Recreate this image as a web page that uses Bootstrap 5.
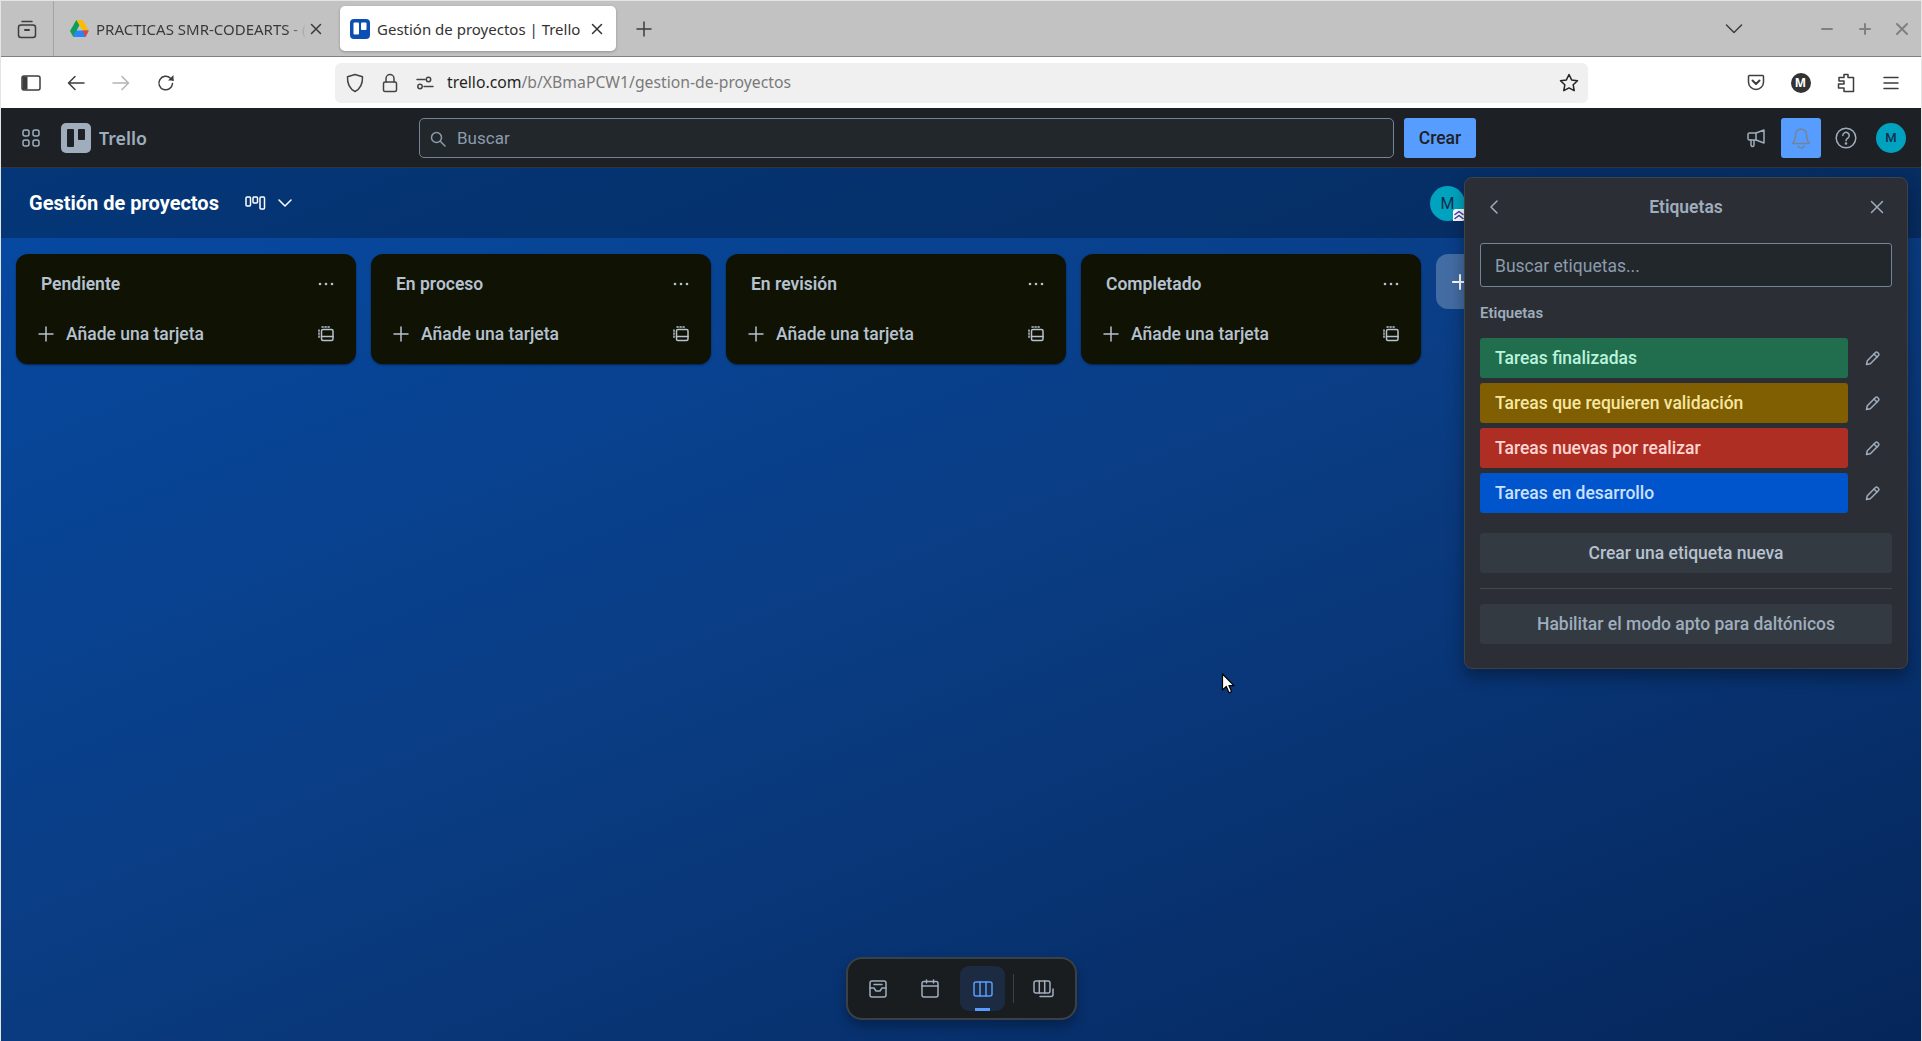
<!DOCTYPE html>
<html lang="es">
<head>
  <meta charset="UTF-8" />
  <meta name="viewport" content="width=device-width, initial-scale=1.0" />
  <title>Gestión de proyectos | Trello</title>
  <link href="https://cdn.jsdelivr.net/npm/bootstrap@5.3.0/dist/css/bootstrap.min.css" rel="stylesheet" />
  <style>
    html, body { height: 100%; margin: 0; overflow: hidden; }
    body { font-family: Roboto, "Liberation Sans", sans-serif; }
    svg { display: block; fill: none; stroke: currentColor; stroke-width: 1.5; stroke-linecap: round; stroke-linejoin: round; }
    .app-shell { position: relative; height: 1041px; border: 1px solid #e4e4e4; border-bottom: 0; display: flex; flex-direction: column; }

    /* firefox chrome */
    .tab-strip { height: 56px; flex: none; background: #c2c2c2; border-bottom: 1px solid #808080; font-family: "Noto Sans", sans-serif; font-size: 15px; color: #3a3a3a; }
    .tab-archive { width: 53px; height: 55px; border-right: 1px solid #a4a4a4; color: #3d3d3d; }
    .tab-item { height: 45px; border-radius: 5px; width: 276px; padding: 0 13px 0 10px; gap: 7px; }
    .tab-first { width: 280px; margin-left: 1px; margin-right: 5px; padding: 0 13px 0 15px; gap: 4px; }
    .tab-active { background: #fff; box-shadow: 0 1px 3px rgba(0,0,0,.25); color: #333; }
    .tab-label { flex: 1; white-space: nowrap; min-width: 0; padding-top: 1px; }
    .tab-first .tab-label { margin-left: 3px; -webkit-mask-image: linear-gradient(to right, #000 92%, transparent 100%); mask-image: linear-gradient(to right, #000 92%, transparent 100%); }
    .tab-plus { margin-left: 20px; color: #3d3d3d; }
    .win-controls { margin-left: auto; }
    .win-chevron { color: #3d3d3d; margin-right: 66px; }
    .win-btn { width: 37.5px; color: #808080; }
    .toolbar { height: 51px; flex: none; background: #fff; padding-left: 7px; padding-right: 8px; }
    .tool-btn { width: 45px; height: 51px; color: #3d3d3d; }
    .tool-off { color: #b5b5b5; }
    .url-bar { width: 1253px; height: 40px; margin-left: 147px; background: #f0f0f0; border-radius: 6px; font-family: "Noto Sans", sans-serif; font-size: 15.75px; color: #7a7a7a; padding: 0 9px 0 2px; }
    .url-icon { width: 35px; color: #444; }
    .url-text { margin-left: 5px; flex: 1; }
    .url-host { color: #1f1f1f; }
    .fx-account { width: 20px; height: 20px; border-radius: 50%; background: #333; color: #fff; font: 700 12px "Noto Sans", sans-serif; }

    /* trello header */
    .top-bar { height: 60px; flex: none; background: #1d2125; border-bottom: 1px solid #31363c; color: #9fadbc; }
    .grid-btn { width: 44px; height: 40px; margin-left: 8px; }
    .brand-logo { width: 30px; height: 30px; margin-left: 8px; border-radius: 5px; background: #9fadbc; padding: 6px; gap: 4px; }
    .brand-bar { width: 8px; height: 18px; background: #1d2125; border-radius: 1px; }
    .brand-bar-short { height: 11px; }
    .brand-name { margin-left: 8px; width: 320px; font: 600 17.8px "Noto Sans", sans-serif; }
    .search-box { width: 975px; height: 40px; background: #22272b; border: 1px solid #738496; border-radius: 5px; padding: 2px 0 0 10px; gap: 11px; font-size: 17px; color: #8c9bab; }
    .create-btn { width: 72px; height: 40px; margin-left: 10px; padding: 0; background: #579dff; border: 0; border-radius: 3px; color: #1d2125; font: 500 17.5px Roboto, sans-serif; }
    .head-actions { margin-left: auto; margin-right: 15px; gap: 5px; }
    .head-btn { width: 40px; height: 40px; border-radius: 3px; }
    .head-on { background: #579dff; color: #738496; }
    .avatar-dot { border-radius: 50%; background: #00a3bf; color: #172b4d; }
    .avatar-head { width: 30px; height: 30px; margin-left: 5px; font: 500 13px Roboto, sans-serif; }

    /* board */
    .board-area { flex: 1; min-height: 0; background: linear-gradient(158deg, #064aa3 0%, #0a3c82 50%, #05265a 100%); }
    .board-head { height: 70px; background: rgba(0,0,0,.26); color: #fff; padding-left: 28px; }
    .board-title { font: 700 20px Roboto, sans-serif; margin-right: 26px; }
    .board-chevron { margin-left: 12px; }
    .avatar-board { position: relative; width: 35px; height: 35px; margin-left: auto; margin-right: 456px; font: 400 16px Roboto, sans-serif; }
    .avatar-badge { position: absolute; right: 0; bottom: 0; width: 12px; height: 12px; border-radius: 3px 0 3px 0; background: #fff; color: #3a3fa8; }
    .lists-row { padding: 16px 0 0 15px; gap: 15px; }
    .list-panel { width: 340px; height: 110px; flex: none; background: #101204; border: 0; border-radius: 12px; box-shadow: 0 1px 2px rgba(0,0,0,.5); color: #b6c2cf; padding: 0 22px 0 25px; }
    .list-head { height: 57px; padding-top: 2px; }
    .list-name { font: 600 17.5px Roboto, sans-serif; flex: 1; }
    .list-add { height: 44px; margin-left: -3px; gap: 12px; padding-top: 1px; font: 500 17.5px Roboto, sans-serif; }
    .list-add-text { flex: 1; }
    .add-list { width: 60px; height: 55px; flex: none; border-radius: 12px; background: rgba(255,255,255,.24); color: #fff; padding-left: 16px; }

    /* labels popover */
    .labels-pop { position: absolute; left: 1463px; top: 176px; width: 444px; height: 492px; background: #2b2e35; border: 1px solid #3d4249; border-radius: 8px; box-shadow: 0 8px 16px rgba(0,0,0,.35); padding: 0 15px; color: #9fadbc; }
    .pop-head { height: 58px; flex: none; }
    .pop-title { flex: 1; text-align: center; font: 600 17.5px Roboto, sans-serif; color: #9fadbc; }
    .pop-icon { width: 28px; color: #9fadbc; }
    .pop-back { margin-left: 9px; }
    .pop-search { height: 44px; flex: none; margin-top: 7px; background: #22272b; border: 1px solid #738496; border-radius: 3px; color: #8c9bab; font: 400 17.5px Roboto, sans-serif; padding: 1px 14px 0; box-shadow: none; }
    .pop-search::placeholder { color: #8c9bab; opacity: 1; }
    .pop-search:focus { background: #22272b; border-color: #738496; box-shadow: none; color: #8c9bab; }
    .pop-sub { margin: 16px 0 15px; height: 20px; font: 600 15px/20px Roboto, sans-serif; color: #9fadbc; }
    .label-list { gap: 5px; margin: 0; }
    .label-chip { width: 368px; flex: none; height: 40px; border-radius: 3px; padding: 0 15px; font: 500 17.5px Roboto, sans-serif; }
    .chip-green { background: #216e4e; color: #baf3db; }
    .chip-yellow { background: #7f5f01; color: #f8e6a0; }
    .chip-red { background: #ae2e24; color: #ffd5d2; }
    .chip-blue { background: #0055cc; color: #cce0ff; }
    .chip-edit { width: 44px; flex: none; padding-left: 17px; color: #9fadbc; }
    .pop-btn { width: 100%; height: 40px; flex: none; padding: 0; background: #343a42; border: 0; border-radius: 3px; color: #b6c2cf; font: 500 17.5px Roboto, sans-serif; }
    .pop-btn:hover { background: #343a42; color: #b6c2cf; }
    .pop-btn-new { margin-top: 20px; }
    .pop-btn-alt { color: #9fadbc; }
    .pop-rule { margin: 15px 0; border: 0; border-top: 1px solid #43494f; opacity: 1; }

    /* bottom switcher */
    .view-switch { position: absolute; left: 845px; top: 956px; width: 231px; height: 63px; background: #1a1d20; border: 2px solid #3b4046; border-radius: 16px; box-shadow: 0 6px 12px rgba(0,0,0,.3); color: #9fadbc; }
    .view-btn { position: relative; width: 45px; height: 45px; border-radius: 9px; margin-left: 7px; }
    .view-on { margin-left: 8px; background: #1c2b41; color: #579dff; }
    .view-on::after { content: ""; position: absolute; left: 15px; bottom: 0; width: 15px; height: 3px; background: #579dff; }
    .view-sep { width: 1px; height: 29px; background: #3b4046; margin: 0 7px 0 8px; }
    .mouse-arrow { position: absolute; left: 1220px; top: 672px; }
  </style>
</head>
<body>
<div class="app-shell">

  <!-- browser tabs -->
  <div class="tab-strip d-flex align-items-center">
    <div class="tab-archive d-flex align-items-center justify-content-center">
      <svg width="20" height="20" viewBox="0 0 20 20"><path d="M5 2.500h10"/><rect x="1.500" y="6" width="17" height="12.500" rx="2.500"/><path d="M8 11h4" stroke-width="2"/></svg>
    </div>
    <div class="tab-item tab-first d-flex align-items-center">
      <svg width="19" height="18" viewBox="0 0 19 18" style="stroke:none">
        <path d="M6.300 0h6.400l6 10.500h-6.200z" fill="#fbbc04"/>
        <path d="M6.300 0l3.100 5.300-6.100 11.700L0 11z" fill="#0f9d58"/>
        <path d="M3.300 17l3-6.500h12.400L15.500 17z" fill="#2684fc"/>
        <path d="M12.500 10.500h6.200L15.500 17z" fill="#ea4335"/>
      </svg>
      <span class="tab-label">PRACTICAS SMR-CODEARTS - (</span>
      <svg width="12" height="12" viewBox="0 0 12 12"><path d="M1.500 1.500l9 9M10.500 1.500l-9 9"/></svg>
    </div>
    <div class="tab-item tab-active d-flex align-items-center">
      <svg width="20" height="20" viewBox="0 0 20 20" style="stroke:none"><rect width="20" height="20" rx="4" fill="#0b4fb3"/><rect x="3.500" y="3.500" width="5.500" height="12" rx="1" fill="#fff"/><rect x="11" y="3.500" width="5.500" height="7.500" rx="1" fill="#fff"/></svg>
      <span class="tab-label">Gestión de proyectos | Trello</span>
      <svg width="12" height="12" viewBox="0 0 12 12"><path d="M1.500 1.500l9 9M10.500 1.500l-9 9"/></svg>
    </div>
    <div class="tab-plus"><svg width="16" height="16" viewBox="0 0 16 16"><path d="M8 1v14M1 8h14"/></svg></div>
    <div class="win-controls d-flex align-items-center">
      <div class="win-chevron"><svg width="18" height="10" viewBox="0 0 18 10"><path d="M1.500 1l7.500 7.500L16.500 1"/></svg></div>
      <div class="win-btn d-flex justify-content-center"><svg width="12" height="12" viewBox="0 0 12 12"><path d="M1 6h10" stroke-width="2"/></svg></div>
      <div class="win-btn d-flex justify-content-center"><svg width="12" height="12" viewBox="0 0 12 12"><path d="M1 6h10M6 1v10" stroke-width="2"/></svg></div>
      <div class="win-btn d-flex justify-content-center"><svg width="12" height="12" viewBox="0 0 12 12"><path d="M1 1l10 10M11 1L1 11" stroke-width="2"/></svg></div>
    </div>
  </div>

  <!-- browser toolbar -->
  <div class="toolbar d-flex align-items-center">
    <div class="tool-btn d-flex align-items-center justify-content-center">
      <svg width="20" height="16" viewBox="0 0 20 16"><rect x="1" y="1" width="18" height="14" rx="2"/><rect x="1.500" y="1.500" width="5" height="13" fill="currentColor" stroke="none"/></svg>
    </div>
    <div class="tool-btn d-flex align-items-center justify-content-center">
      <svg width="18" height="16" viewBox="0 0 18 16"><path d="M17 8H1.500M8 1.500L1.500 8 8 14.500"/></svg>
    </div>
    <div class="tool-btn tool-off d-flex align-items-center justify-content-center">
      <svg width="18" height="16" viewBox="0 0 18 16"><path d="M1 8h15.500M10 1.500L16.500 8 10 14.500"/></svg>
    </div>
    <div class="tool-btn d-flex align-items-center justify-content-center">
      <svg width="18" height="18" viewBox="0 0 18 18"><path d="M15.500 9.500a6.800 6.800 0 1 1-2-5.300l2.500 2"/><path d="M16.500 1v5.500H11" fill="currentColor" stroke="none"/></svg>
    </div>
    <div class="url-bar d-flex align-items-center">
      <div class="url-icon d-flex justify-content-center"><svg width="18" height="20" viewBox="0 0 18 20"><path d="M9 1.500l7.500 2.200c.3 6.800-1.700 11.800-7.500 14.800C3.200 15.500 1.200 10.500 1.500 3.700z"/></svg></div>
      <div class="url-icon d-flex justify-content-center"><svg width="16" height="20" viewBox="0 0 16 20"><rect x="1.500" y="9" width="13" height="9.500" rx="1.500"/><path d="M4 9V5.500a4 4 0 0 1 8 0V9"/></svg></div>
      <div class="url-icon d-flex justify-content-center"><svg width="18" height="16" viewBox="0 0 18 16"><circle cx="12.500" cy="4.500" r="2.200"/><circle cx="4" cy="11.500" r="2.200"/><path d="M1 4.500h8M8 11.500h9"/></svg></div>
      <div class="url-text"><span class="url-host">trello.com</span>/b/XBmaPCW1/gestion-de-proyectos</div>
      <svg width="20" height="20" viewBox="0 0 20 20" class="text-dark"><path d="M10 1.500l2.600 5.400 5.900.8-4.300 4.100 1 5.900L10 14.900l-5.200 2.800 1-5.900L1.500 7.700l5.900-.8z"/></svg>
    </div>
    <div class="d-flex ms-auto">
      <div class="tool-btn d-flex align-items-center justify-content-center">
        <svg width="18" height="18" viewBox="0 0 18 18"><path d="M2.500 1.500h13a1 1 0 0 1 1 1V8a7.500 7.500 0 0 1-15 0V2.500a1 1 0 0 1 1-1z"/><path d="M5.500 6.500L9 10l3.500-3.500" stroke-width="2"/></svg>
      </div>
      <div class="tool-btn d-flex align-items-center justify-content-center"><span class="fx-account d-flex align-items-center justify-content-center">M</span></div>
      <div class="tool-btn d-flex align-items-center justify-content-center">
        <svg width="18" height="20" viewBox="0 0 18 20"><path d="M7 1.500h4v3h5.500v14H7v-3.500H1.500v-4H7V8H2V4.500h5z"/></svg>
      </div>
      <div class="tool-btn d-flex align-items-center justify-content-center">
        <svg width="16" height="14" viewBox="0 0 16 14"><path d="M1 1.500h14M1 7h14M1 12.500h14"/></svg>
      </div>
    </div>
  </div>

  <!-- trello top bar -->
  <nav class="top-bar d-flex align-items-center">
    <div class="grid-btn d-flex align-items-center justify-content-center">
      <svg width="18" height="18" viewBox="0 0 18 18"><rect x="1" y="1" width="6" height="6" rx="2"/><rect x="11" y="1" width="6" height="6" rx="2"/><rect x="1" y="11" width="6" height="6" rx="2"/><rect x="11" y="11" width="6" height="6" rx="2"/></svg>
    </div>
    <div class="brand-logo d-flex"><span class="brand-bar"></span><span class="brand-bar brand-bar-short"></span></div>
    <span class="brand-name">Trello</span>
    <div class="search-box d-flex align-items-center">
      <svg width="16" height="16" viewBox="0 0 16 16"><circle cx="6.500" cy="6.500" r="5"/><path d="M10.500 10.500l4.500 4.500"/></svg>
      <span>Buscar</span>
    </div>
    <button type="button" class="btn create-btn">Crear</button>
    <div class="head-actions d-flex align-items-center">
      <div class="head-btn d-flex align-items-center justify-content-center">
        <svg width="20" height="20" viewBox="0 0 20 20"><path d="M18 2v13l-8-3H3.500a1.500 1.500 0 0 1-1.500-1.500v-4A1.500 1.500 0 0 1 3.500 5H10z"/><path d="M10 5v7M5 12v5a1.500 1.500 0 0 0 3 0v-4.500"/></svg>
      </div>
      <div class="head-btn head-on d-flex align-items-center justify-content-center">
        <svg width="20" height="22" viewBox="0 0 20 22"><path d="M10 2a5.500 5.500 0 0 0-5.500 5.500c0 5-1 7-3 9h17c-2-2-3-4-3-9A5.500 5.500 0 0 0 10 2z"/><path d="M7 19a3.200 3.200 0 0 0 6 0"/></svg>
      </div>
      <div class="head-btn d-flex align-items-center justify-content-center">
        <svg width="22" height="22" viewBox="0 0 22 22"><circle cx="11" cy="11" r="9.800"/><path d="M7.800 8.500a3.200 3.200 0 1 1 5 2.700c-1.100.7-1.800 1.300-1.800 2.600"/><circle cx="11" cy="16.500" r=".6"/></svg>
      </div>
      <span class="avatar-dot avatar-head d-flex align-items-center justify-content-center">M</span>
    </div>
  </nav>

  <!-- board -->
  <main class="board-area">
    <div class="board-head d-flex align-items-center">
      <span class="board-title">Gestión de proyectos</span>
      <svg width="21" height="14" viewBox="0 0 21 14" stroke-width="2"><rect x="1" y="1" width="4.500" height="9" rx="1"/><rect x="8" y="1" width="4.500" height="6" rx="1"/><rect x="15" y="1" width="4.500" height="12" rx="1"/></svg>
      <svg class="board-chevron" width="14" height="8" viewBox="0 0 14 8"><path d="M1 1l6 6 6-6"/></svg>
      <div class="avatar-dot avatar-board d-flex align-items-center justify-content-center">M
        <span class="avatar-badge d-flex align-items-center justify-content-center"><svg width="10" height="10" viewBox="0 0 10 10"><path d="M1 4.500L5 1.500l4 3M1 8.500l4-3 4 3"/></svg></span>
      </div>
    </div>
    <div class="lists-row d-flex align-items-start">
      <div class="card list-panel">
        <div class="list-head d-flex align-items-center"><span class="list-name">Pendiente</span><svg width="16" height="4" viewBox="0 0 16 4"><circle cx="2" cy="2" r="1.300" fill="currentColor" stroke="none"/><circle cx="8" cy="2" r="1.300" fill="currentColor" stroke="none"/><circle cx="14" cy="2" r="1.300" fill="currentColor" stroke="none"/></svg></div>
        <div class="list-add d-flex align-items-center"><svg width="16" height="16" viewBox="0 0 16 16"><path d="M8 1v14M1 8h14"/></svg><span class="list-add-text">Añade una tarjeta</span><svg width="16" height="16" viewBox="0 0 16 16" stroke-width="1.300"><rect x="3.500" y="3.500" width="11.500" height="11" rx="1.500"/><path d="M3.500 10.500h11.500"/><path d="M1 4v9M4 1h9" stroke-dasharray="1.200 1.800"/></svg></div>
      </div>
      <div class="card list-panel">
        <div class="list-head d-flex align-items-center"><span class="list-name">En proceso</span><svg width="16" height="4" viewBox="0 0 16 4"><circle cx="2" cy="2" r="1.300" fill="currentColor" stroke="none"/><circle cx="8" cy="2" r="1.300" fill="currentColor" stroke="none"/><circle cx="14" cy="2" r="1.300" fill="currentColor" stroke="none"/></svg></div>
        <div class="list-add d-flex align-items-center"><svg width="16" height="16" viewBox="0 0 16 16"><path d="M8 1v14M1 8h14"/></svg><span class="list-add-text">Añade una tarjeta</span><svg width="16" height="16" viewBox="0 0 16 16" stroke-width="1.300"><rect x="3.500" y="3.500" width="11.500" height="11" rx="1.500"/><path d="M3.500 10.500h11.500"/><path d="M1 4v9M4 1h9" stroke-dasharray="1.200 1.800"/></svg></div>
      </div>
      <div class="card list-panel">
        <div class="list-head d-flex align-items-center"><span class="list-name">En revisión</span><svg width="16" height="4" viewBox="0 0 16 4"><circle cx="2" cy="2" r="1.300" fill="currentColor" stroke="none"/><circle cx="8" cy="2" r="1.300" fill="currentColor" stroke="none"/><circle cx="14" cy="2" r="1.300" fill="currentColor" stroke="none"/></svg></div>
        <div class="list-add d-flex align-items-center"><svg width="16" height="16" viewBox="0 0 16 16"><path d="M8 1v14M1 8h14"/></svg><span class="list-add-text">Añade una tarjeta</span><svg width="16" height="16" viewBox="0 0 16 16" stroke-width="1.300"><rect x="3.500" y="3.500" width="11.500" height="11" rx="1.500"/><path d="M3.500 10.500h11.500"/><path d="M1 4v9M4 1h9" stroke-dasharray="1.200 1.800"/></svg></div>
      </div>
      <div class="card list-panel">
        <div class="list-head d-flex align-items-center"><span class="list-name">Completado</span><svg width="16" height="4" viewBox="0 0 16 4"><circle cx="2" cy="2" r="1.300" fill="currentColor" stroke="none"/><circle cx="8" cy="2" r="1.300" fill="currentColor" stroke="none"/><circle cx="14" cy="2" r="1.300" fill="currentColor" stroke="none"/></svg></div>
        <div class="list-add d-flex align-items-center"><svg width="16" height="16" viewBox="0 0 16 16"><path d="M8 1v14M1 8h14"/></svg><span class="list-add-text">Añade una tarjeta</span><svg width="16" height="16" viewBox="0 0 16 16" stroke-width="1.300"><rect x="3.500" y="3.500" width="11.500" height="11" rx="1.500"/><path d="M3.500 10.500h11.500"/><path d="M1 4v9M4 1h9" stroke-dasharray="1.200 1.800"/></svg></div>
      </div>
      <div class="add-list d-flex align-items-center"><svg width="16" height="16" viewBox="0 0 16 16"><path d="M8 1v14M1 8h14" stroke-width="2"/></svg></div>
    </div>
  </main>

  <!-- labels popover -->
  <section class="labels-pop d-flex flex-column">
    <div class="pop-head d-flex align-items-center">
      <div class="pop-icon"><svg class="pop-back" width="10" height="16" viewBox="0 0 10 16"><path d="M8 2L2 8l6 6"/></svg></div>
      <span class="pop-title">Etiquetas</span>
      <div class="pop-icon d-flex justify-content-end"><svg width="14" height="14" viewBox="0 0 14 14" class="me-2"><path d="M1.500 1.500l11 11M12.500 1.500l-11 11"/></svg></div>
    </div>
    <input type="text" class="form-control pop-search" placeholder="Buscar etiquetas..." />
    <div class="pop-sub">Etiquetas</div>
    <ul class="label-list list-unstyled d-flex flex-column">
      <li class="d-flex align-items-center"><span class="label-chip chip-green d-flex align-items-center">Tareas finalizadas</span><span class="chip-edit d-flex"><svg width="15" height="15" viewBox="0 0 15 15"><path d="M1.500 13.500l.8-3.800L10.500 1.500a1.400 1.400 0 0 1 2 0l1 1a1.400 1.400 0 0 1 0 2L5.300 12.700z"/><path d="M9 3l3 3"/></svg></span></li>
      <li class="d-flex align-items-center"><span class="label-chip chip-yellow d-flex align-items-center">Tareas que requieren validación</span><span class="chip-edit d-flex"><svg width="15" height="15" viewBox="0 0 15 15"><path d="M1.500 13.500l.8-3.800L10.500 1.500a1.400 1.400 0 0 1 2 0l1 1a1.400 1.400 0 0 1 0 2L5.300 12.700z"/><path d="M9 3l3 3"/></svg></span></li>
      <li class="d-flex align-items-center"><span class="label-chip chip-red d-flex align-items-center">Tareas nuevas por realizar</span><span class="chip-edit d-flex"><svg width="15" height="15" viewBox="0 0 15 15"><path d="M1.500 13.500l.8-3.800L10.500 1.500a1.400 1.400 0 0 1 2 0l1 1a1.400 1.400 0 0 1 0 2L5.300 12.700z"/><path d="M9 3l3 3"/></svg></span></li>
      <li class="d-flex align-items-center"><span class="label-chip chip-blue d-flex align-items-center">Tareas en desarrollo</span><span class="chip-edit d-flex"><svg width="15" height="15" viewBox="0 0 15 15"><path d="M1.500 13.500l.8-3.800L10.500 1.500a1.400 1.400 0 0 1 2 0l1 1a1.400 1.400 0 0 1 0 2L5.300 12.700z"/><path d="M9 3l3 3"/></svg></span></li>
    </ul>
    <button type="button" class="btn pop-btn pop-btn-new">Crear una etiqueta nueva</button>
    <hr class="pop-rule" />
    <button type="button" class="btn pop-btn pop-btn-alt">Habilitar el modo apto para daltónicos</button>
  </section>

  <!-- bottom view switcher -->
  <div class="view-switch d-flex align-items-center">
    <div class="view-btn d-flex align-items-center justify-content-center">
      <svg width="18" height="18" viewBox="0 0 18 18"><rect x="1" y="1" width="16" height="16" rx="2"/><path d="M1 8h4l2 3h4l2-3h4M5 4.500h8"/></svg>
    </div>
    <div class="view-btn d-flex align-items-center justify-content-center">
      <svg width="18" height="19" viewBox="0 0 18 19"><rect x="1" y="2.500" width="16" height="15.500" rx="2"/><path d="M1 7h16M5.500 1v3M12.500 1v3"/></svg>
    </div>
    <div class="view-btn view-on d-flex align-items-center justify-content-center">
      <svg width="20" height="16" viewBox="0 0 20 16"><rect x="1" y="1" width="18" height="14" rx="2"/><path d="M7 1v14M13 1v14"/></svg>
    </div>
    <span class="view-sep"></span>
    <div class="view-btn ms-0 d-flex align-items-center justify-content-center">
      <svg width="21" height="18" viewBox="0 0 21 18"><rect x="1" y="1" width="16" height="12" rx="2"/><path d="M6.300 1v12M11.700 1v12M7 16.500h11a2 2 0 0 0 2-2V9"/></svg>
    </div>
  </div>

  <svg class="mouse-arrow" width="14" height="22" viewBox="0 0 14 22" style="stroke:#000;stroke-width:1.200"><path d="M1.500 1v16l3.800-3.500 2.700 6.200 2.600-1.100-2.700-6h5z" fill="#fff"/></svg>
</div>
<script src="https://cdn.jsdelivr.net/npm/bootstrap@5.3.0/dist/js/bootstrap.bundle.min.js"></script>
</body>
</html>
